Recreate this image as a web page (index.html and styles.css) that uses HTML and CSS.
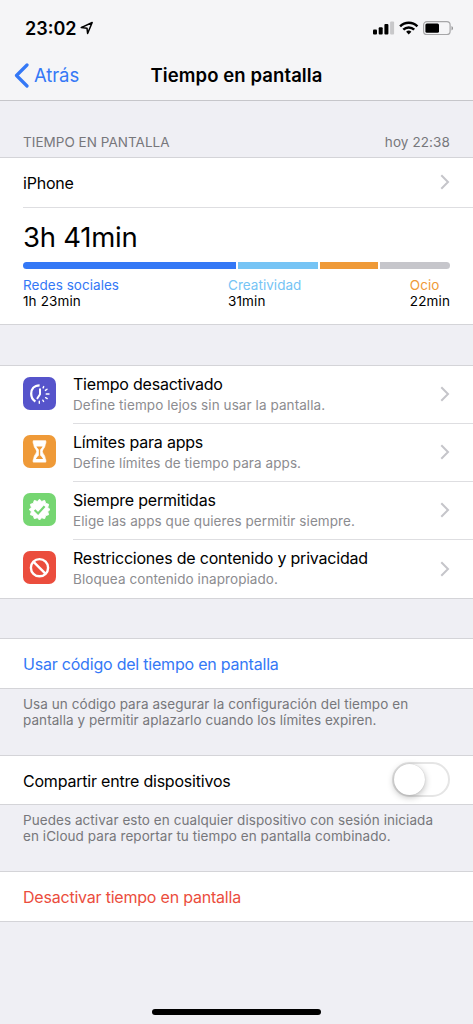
FILE: index.html
```html
<!DOCTYPE html>
<html lang="es">
<head>
<meta charset="utf-8">
<meta name="viewport" content="width=device-width, initial-scale=1">
<title>Tiempo en pantalla</title>
<link rel="stylesheet" href="styles.css">
</head>
<body>
<svg width="0" height="0" class="defs" aria-hidden="true">
  <symbol id="chevron" viewBox="0 0 10 16"><path d="M1.300 1.300 8 8l-6.700 6.700" fill="none" stroke="#c5c5ca" stroke-width="2"/></symbol>
</svg>
<div class="screen">
  <header class="header">
    <div class="status">
      <span class="clock">23:02</span>
      <svg class="location" viewBox="0 0 14 14"><path d="M1.200 6.600 12.200 1.500 7.600 12.500 7 7.200z" fill="none" stroke="#000" stroke-width="1.500" stroke-linejoin="round"/></svg>
      <svg class="indicators" viewBox="0 0 82 16">
        <rect x="0" y="9.500" width="4" height="5" rx="1"/>
        <rect x="5.700" y="7.200" width="4" height="7.300" rx="1"/>
        <rect x="11.400" y="4" width="4" height="10.500" rx="1"/>
        <rect x="17.100" y="1.500" width="4" height="13" rx="1" fill="#c8c8ca"/>
        <g fill="none" stroke="#000" stroke-width="2.500"><path d="M27.100 6.300a12.400 12.400 0 0 1 17.300 0"/><path d="M30.300 9.600a7.800 7.800 0 0 1 10.900 0"/></g>
        <path d="m35.750 14.400-2.600-2.600a3.800 3.800 0 0 1 5.200 0z"/>
        <rect x="50.600" y="1.700" width="26.500" height="12.800" rx="3.300" fill="none" stroke="#a6a6a8" stroke-width="1.200"/>
        <rect x="52.400" y="3.500" width="13.600" height="9.300" rx="1.500"/>
        <path d="M78.500 6c2 .8 2 3.700 0 4.500z" fill="#969698"/>
      </svg>
    </div>
    <nav class="nav">
      <a class="back"><svg class="back-icon" viewBox="0 0 15 25"><path d="M13 2 2.500 12.500 13 23" fill="none" stroke="#3478f6" stroke-width="3.200" stroke-linecap="round" stroke-linejoin="round"/></svg><span>Atrás</span></a>
      <h1 class="nav-title">Tiempo en pantalla</h1>
    </nav>
  </header>

  <div class="section-head"><span class="section-name">TIEMPO EN PANTALLA</span><span class="section-time">hoy 22:38</span></div>
  <section class="group">
    <div class="row device"><span class="label">iPhone</span><svg class="chevron"><use href="#chevron"/></svg></div>
    <div class="usage">
      <div class="total">3h 41min</div>
      <div class="bar"><i class="social"></i><i class="creative"></i><i class="leisure"></i><i class="other"></i></div>
      <div class="legend">
        <div><div class="cat blue">Redes sociales</div><div class="time">1h 23min</div></div>
        <div><div class="cat sky">Creatividad</div><div class="time">31min</div></div>
        <div><div class="cat orange">Ocio</div><div class="time">22min</div></div>
      </div>
    </div>
  </section>

  <section class="group options">
    <div class="option">
      <svg class="icon" viewBox="0 0 33 33"><rect width="33" height="33" rx="7" fill="#5654cb"/><g fill="none" stroke="#fff" stroke-linecap="round"><path d="M16.600 8.300C11 8.300 8.200 12.200 8.200 16.800c0 3.200 1.600 6.100 4.200 7.600" stroke-width="2.300" stroke-linecap="butt"/><path d="M17 12.300v5l-2.600 3.900" stroke-width="2"/><path d="M20.700 9.600l-.6 1.300M24 12.200l-1.600 1.200M23.200 17H26M22.600 20.700l1.600.9M19.800 23.200l.8 1.300M16.300 24.300v2" stroke-width="1.400"/></g></svg>
      <div class="option-body"><div class="option-text"><div class="label">Tiempo desactivado</div><div class="desc">Define tiempo lejos sin usar la pantalla.</div></div><svg class="chevron"><use href="#chevron"/></svg></div>
    </div>
    <div class="option">
      <svg class="icon" viewBox="0 0 33 33"><rect width="33" height="33" rx="7" fill="#ef9a38"/><path d="M10.200 5.800h12.600v2.600h-.5c0 4.600-3 5.600-3 8s3 3.600 3 8.200h.5v2.500H10.200v-2.500h.5c0-4.600 3-5.800 3-8.200s-3-3.400-3-8h-.5z" fill="#fff" stroke="#fff" stroke-width=".8" stroke-linejoin="round"/><path d="M13.400 11.600h6.200c-.7 1.600-1.700 2.200-2.400 3.200v5.600c.9.700 2.300 1.800 2.900 3.600h-7.200c.6-1.800 2-2.900 2.900-3.600v-5.600c-.7-1-1.700-1.600-2.400-3.200z" fill="#ef9a38"/></svg>
      <div class="option-body"><div class="option-text"><div class="label">Límites para apps</div><div class="desc">Define límites de tiempo para apps.</div></div><svg class="chevron"><use href="#chevron"/></svg></div>
    </div>
    <div class="option">
      <svg class="icon" viewBox="0 0 33 33"><rect width="33" height="33" rx="7" fill="#76d672"/><path d="M16.500 6.200 18.700 8.500 21.700 7.400 22.600 10.400 25.600 11.300 24.700 14.400 27 16.500 24.700 18.700 25.600 21.700 22.600 22.600 21.700 25.600 18.700 24.700 16.500 27 14.400 24.700 11.300 25.600 10.400 22.600 7.400 21.700 8.400 18.700 6.200 16.500 8.400 14.400 7.400 11.300 10.400 10.400 11.300 7.400 14.400 8.500z" fill="#fff" stroke="#fff" stroke-width="1" stroke-linejoin="round"/><path d="m11.600 17 3.500 3.500 6.500-7.300" fill="none" stroke="#76d672" stroke-width="2.200"/></svg>
      <div class="option-body"><div class="option-text"><div class="label">Siempre permitidas</div><div class="desc">Elige las apps que quieres permitir siempre.</div></div><svg class="chevron"><use href="#chevron"/></svg></div>
    </div>
    <div class="option">
      <svg class="icon" viewBox="0 0 33 33"><rect width="33" height="33" rx="7" fill="#eb4d3d"/><g fill="none" stroke="#fff" stroke-width="2.400"><circle cx="16.500" cy="16.700" r="8.600"/><path d="m10.600 10.800 11.800 11.800"/></g></svg>
      <div class="option-body"><div class="option-text"><div class="label">Restricciones de contenido y privacidad</div><div class="desc">Bloquea contenido inapropiado.</div></div><svg class="chevron"><use href="#chevron"/></svg></div>
    </div>
  </section>

  <section class="group code"><div class="row"><a class="label blue">Usar código del tiempo en pantalla</a></div></section>
  <p class="note">Usa un código para asegurar la configuración del tiempo en<br>pantalla y permitir aplazarlo cuando los límites expiren.</p>
  <section class="group share"><div class="row"><span class="label">Compartir entre dispositivos</span><span class="switch"><span class="knob"></span></span></div></section>
  <p class="note">Puedes activar esto en cualquier dispositivo con sesión iniciada<br>en iCloud para reportar tu tiempo en pantalla combinado.</p>
  <section class="group"><div class="row"><a class="label red">Desactivar tiempo en pantalla</a></div></section>
  <div class="home"></div>
</div>
</body>
</html>
```
FILE: styles.css
```css
* { box-sizing: border-box; }
body { margin: 0; background: #efeff4; color: #000; font-family: Inter, "Liberation Sans", sans-serif; }
.defs { position: absolute; }
.screen { width: 473px; height: 1024px; display: flex; flex-direction: column; overflow: hidden; }
.header { height: 101px; flex: none; background: #f5f5f7; border-bottom: 1px solid #c6c6ca; }
.status { height: 50px; padding: 6px 18px 0 25px; display: flex; align-items: center; }
.clock { font-size: 18px; font-weight: 600; }
.location { width: 14px; height: 14px; margin-left: 3px; }
.indicators { width: 82px; height: 16px; margin-left: auto; }
.nav { height: 50px; display: grid; grid-template-columns: 1fr auto 1fr; align-items: center; padding: 0 14px; }
.back { display: flex; align-items: center; gap: 5px; color: #3478f6; font-size: 18.5px; letter-spacing: -.1px; }
.back-icon { width: 15px; height: 25px; }
.nav-title { margin: 0; font-size: 18.5px; font-weight: 600; letter-spacing: .09px; }
.section-head { height: 56px; flex: none; display: flex; justify-content: space-between; padding: 32px 23px 0; font-size: 13.5px; line-height: 18px; color: #77777b; }
.section-name { letter-spacing: .03px; }
.section-time { letter-spacing: .1px; }
.group { flex: none; background: #fff; border-top: 1px solid #d4d4d8; border-bottom: 1px solid #d4d4d8; }
.row { height: 49px; display: flex; align-items: center; justify-content: space-between; padding: 0 23px; }
.label { font-size: 16px; line-height: 20px; letter-spacing: -.21px; }
.chevron { width: 10px; height: 16px; flex: none; margin-top: -1px; }
.device .chevron { margin-top: -2px; }
.usage { height: 117px; margin-left: 23px; border-top: 1px solid #dedee1; padding: 12px 23px 0 0; }
.total { font-size: 27.5px; line-height: 34px; letter-spacing: -.25px; }
.bar { height: 7px; margin-top: 8px; display: grid; grid-template-columns: 213px 80px 58px 1fr; gap: 2px; border-radius: 4px; overflow: hidden; }
.social { background: #3478f6; }
.creative { background: #76c4f5; }
.leisure { background: #ef9a38; }
.other { background: #c6c6cb; }
.legend { margin-top: 8px; display: grid; grid-template-columns: 205px 1fr auto; font-size: 13.5px; line-height: 16px; }
.cat { letter-spacing: .04px; }
.time { letter-spacing: .12px; }
.blue { color: #3478f6; }
.sky { color: #76c4f5; }
.orange { color: #ef9a38; }
.red { color: #eb4d3d; }
.options { margin-top: 40px; height: 234px; }
.option { height: 58px; display: flex; align-items: center; padding-left: 23px; gap: 17px; }
.icon { width: 33px; height: 33px; flex: none; margin-top: -3px; }
.option-body { flex: 1; height: 58px; padding-right: 23px; display: flex; justify-content: space-between; align-items: center; border-bottom: 1px solid #dedee1; }
.option:last-child .option-body { border-bottom: 0; }
.desc { font-size: 13.5px; line-height: 17px; margin-top: 3px; color: #8c8c90; letter-spacing: .08px; }
.option-text { margin-top: -2px; }
.code { margin-top: 39px; }
.note { flex: none; height: 66px; margin: 0; padding: 7px 23px 0; font-size: 13.5px; line-height: 16px; letter-spacing: .06px; color: #77777b; }
.share .row { height: 48px; padding-top: 2px; }
.switch { width: 58px; height: 35px; border: 2px solid #e5e5e5; border-radius: 18px; display: flex; margin-top: -3px; }
.knob { width: 31px; height: 31px; border-radius: 50%; background: #fff; box-shadow: 0 2px 7px rgba(0,0,0,.28), 0 0 1px rgba(0,0,0,.2); }
.home { flex: none; width: 169px; height: 6px; border-radius: 3px; background: #000; margin: auto auto 9px 152px; }
```
